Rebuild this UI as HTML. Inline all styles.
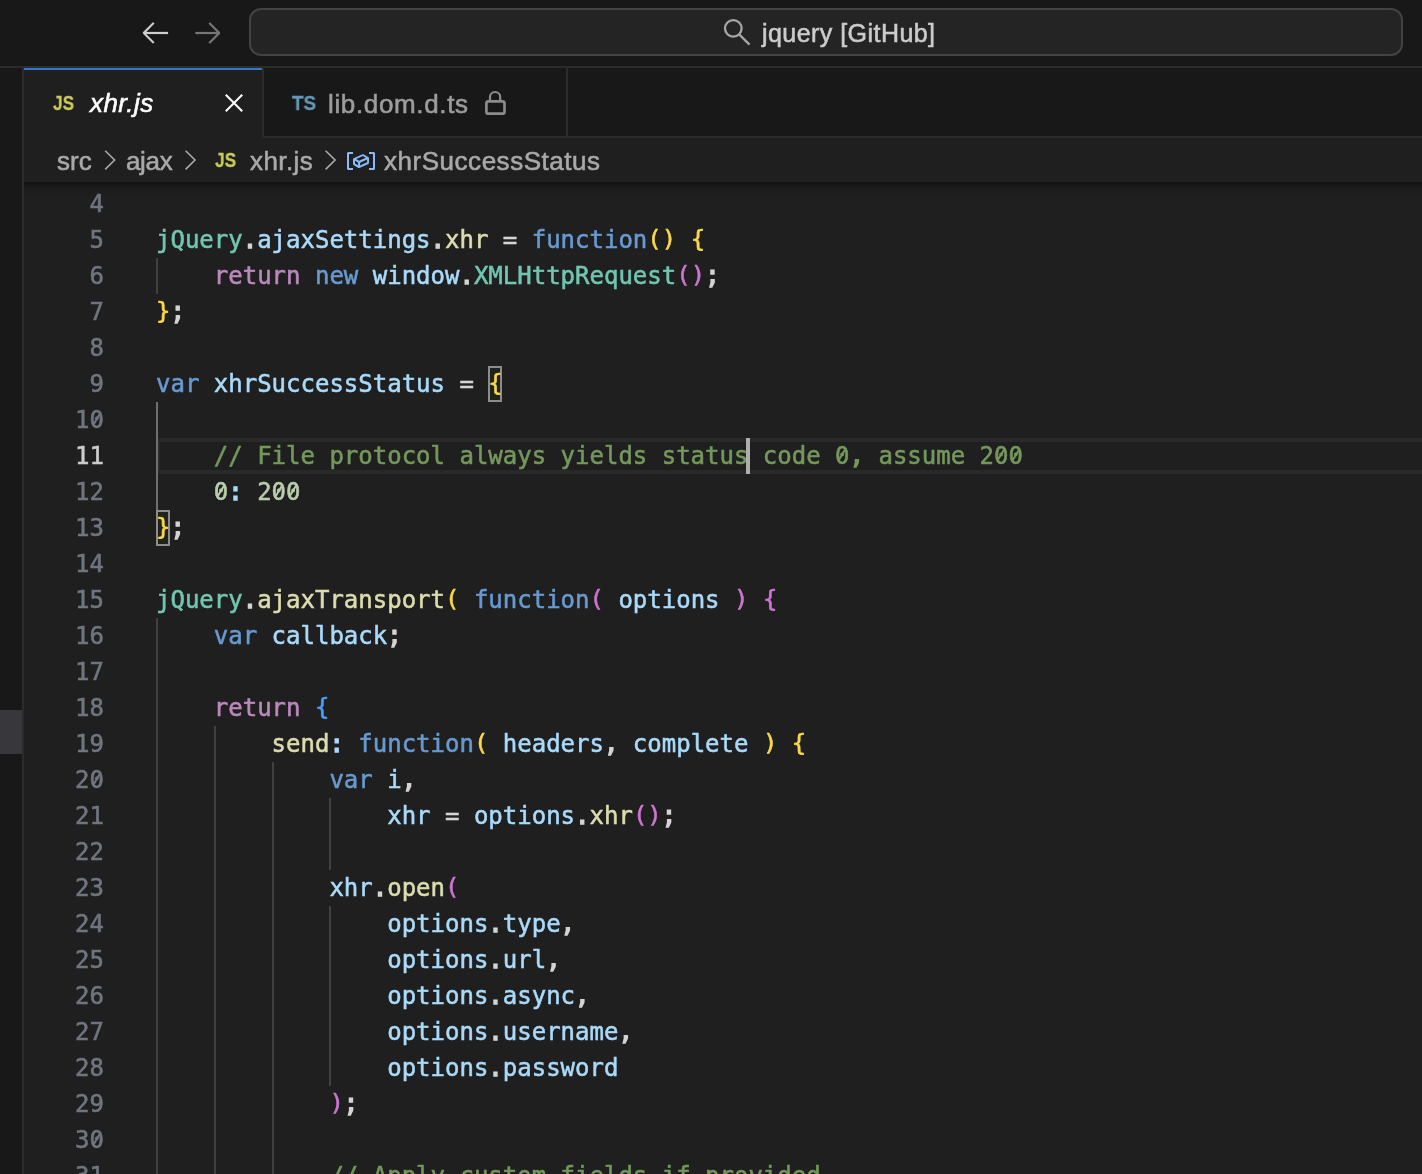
<!DOCTYPE html>
<html lang="en">
<head>
<meta charset="utf-8">
<title>xhr.js - jquery [GitHub]</title>
<style>
*{box-sizing:border-box;margin:0;padding:0}
html,body{width:1422px;height:1174px;overflow:hidden;background:#1f1f1f}
body{position:relative;font-family:"Liberation Sans",sans-serif;color:#ccc}
.abs{position:absolute}
.ui{will-change:transform;-webkit-text-stroke:0.55px}
#titlebar{left:0;top:0;width:1422px;height:68px;background:#181818;border-bottom:2px solid #2b2b2b}
#cc{left:249px;top:8px;width:1154px;height:48px;border:2px solid #434343;border-radius:12px;background:#242424}
#cctext{left:762px;top:17.5px;font-size:25px;line-height:30px;color:#ccc;white-space:pre;letter-spacing:.45px}
#side{left:0;top:68px;width:24px;height:1106px;background:#181818;border-right:2px solid #2b2b2b}
#sel{left:0;top:710px;width:22px;height:44px;background:#37373c}
#tabs{left:24px;top:68px;width:1398px;height:70px;background:#181818;border-bottom:2px solid #2b2b2b}
#tab1{left:24px;top:68px;width:240px;height:70px;background:#1f1f1f;border-right:2px solid #2b2b2b}
#bt{left:24px;top:68px;width:238px;height:2px;background:#3376cd}
#tab2{left:264px;top:68px;width:304px;height:68px;background:#181818;border-right:2px solid #2b2b2b}
#crumbs{left:24px;top:138px;width:1398px;height:44px;background:#1f1f1f}
.bc{top:146px;font-size:26px;line-height:30px;color:#a9a9a9;white-space:pre}
.tabt{font-size:26px;line-height:30px;white-space:pre}
#editor{left:24px;top:182px;width:1398px;height:992px;background:#1f1f1f;overflow:hidden}
#shadow{left:24px;top:182px;width:1398px;height:13px;background:linear-gradient(rgba(0,0,0,.42),rgba(0,0,0,.24) 25%,rgba(0,0,0,.1) 55%,rgba(0,0,0,.03) 80%,rgba(0,0,0,0));z-index:5}
#code{left:0;top:0;width:1422px;height:1174px;overflow:hidden;font-family:"DejaVu Sans Mono","Liberation Mono",monospace;font-size:24px;line-height:36px;tab-size:4;-moz-tab-size:4;will-change:transform;-webkit-text-stroke:0.55px}
.ln{position:absolute;left:24px;width:80px;text-align:right;color:#6f7680;height:36px;letter-spacing:0}
.ln.cur{color:#ccc}
.cl{position:absolute;left:156px;height:36px;white-space:pre}
.pn{-webkit-text-stroke:1.4px}
.br{display:inline-block;height:36px;vertical-align:top;transform-origin:50% 6px;transform:translateY(-1px) scaleY(.985)}
.ig{position:absolute;width:2px;background:#404040}
.ig.act{background:#707070}
.zs{position:absolute;width:2.3px;height:13.4px;margin:-6.7px 0 0 -1.15px;transform:rotate(31deg);border-radius:1px}
#hl{left:156px;top:438px;width:1266px;height:36px;border:4px solid #292929;border-right:0}
.bm{position:absolute;height:36px;width:14px;border:2px solid #8c8c8c;background:#1e2419}
#cursor{left:746px;top:438px;width:4px;height:36px;background:#aeafad}
svg{position:absolute;overflow:visible}
</style>
</head>
<body>
<div id="titlebar" class="abs"></div>
<div id="cc" class="abs"></div>
<!-- nav arrows -->
<svg style="left:139px;top:16.4px" width="32" height="32" viewBox="0 0 16 16" fill="#d0d0d0" stroke="#d0d0d0" stroke-width=".1">
  <path d="M7 3.093l-5 5V8.8l5 5 .707-.707-4.146-4.147H14.500v-1H3.560L7.707 3.800 7 3.093z"/>
</svg>
<svg style="left:192px;top:16.4px" width="32" height="32" viewBox="0 0 16 16" fill="#777" stroke="#777" stroke-width=".1">
  <path d="M9 13.887l5-5V8.180l-5-5-.707.707 4.146 4.147H1.700v1h10.740L8.293 13.180l.707.707z"/>
</svg>
<!-- search icon -->
<svg style="left:720px;top:16px" width="34" height="34" viewBox="720 16 34 34" fill="none" stroke="#a6a6a6" stroke-width="2.3">
  <circle cx="733.3" cy="28.35" r="8.3"/>
  <path d="M739.4 34.6L749.5 44.6"/>
</svg>
<div id="cctext" class="abs ui">jquery [GitHub]</div>

<div id="side" class="abs"></div>
<div id="sel" class="abs"></div>

<div id="tabs" class="abs"></div>
<div id="tab1" class="abs"></div><div id="bt" class="abs"></div>
<div id="tab2" class="abs"></div>
<!-- tab 1 contents -->
<div class="abs jsico ui" style="left:53px;top:91px">JS</div>
<div class="abs tabt ui" style="left:89.5px;top:88.3px;color:#fff;font-style:italic;letter-spacing:.4px">xhr.js</div>
<svg style="left:224px;top:93px" width="20" height="20" viewBox="224 93 20 20" fill="none" stroke="#fff" stroke-width="2">
  <path d="M225.8 94.8L242.2 111.2M242.2 94.8L225.8 111.2"/>
</svg>
<!-- tab 2 contents -->
<div class="abs tsico ui" style="left:291.5px;top:91px;transform:scaleX(.9)">TS</div>
<div class="abs tabt ui" style="left:328.3px;top:88.5px;color:#9d9d9d;letter-spacing:.65px">lib.dom.d.ts</div>
<svg style="left:483px;top:89px" width="26" height="28" viewBox="483 89 26 28" fill="none" stroke="#8b8b8b" stroke-width="2">
  <rect x="486.4" y="101.4" width="18.1" height="12.3" rx="2" stroke-width="2.7"/>
  <path d="M490 100.6V97.1a5.1 5.1 0 0 1 10.200 0V100.600" stroke-width="2.2"/>
</svg>

<div id="crumbs" class="abs"></div>
<div class="abs bc ui" style="left:57px;letter-spacing:0px">src</div>
<div class="abs bc ui" style="left:125.8px;letter-spacing:-.35px">ajax</div>
<div class="abs jsico ui" style="left:215px;top:148px">JS</div>
<div class="abs bc ui" style="left:250px;letter-spacing:.4px">xhr.js</div>
<div class="abs bc ui" style="left:384.4px;letter-spacing:.53px">xhrSuccessStatus</div>
<svg style="left:100px;top:148px" width="240" height="26" viewBox="100 148 240 26" fill="none" stroke="#a9a9a9" stroke-width="1.6">
  <path d="M105.2 150.7L114.6 160.05L105.2 169.4"/>
  <path d="M185.6 150.7L195 160.05L185.6 169.4"/>
  <path d="M325.6 150.7L335.1 160.05L325.6 169.4"/>
</svg>
<!-- symbol-variable icon -->
<svg style="left:345.3px;top:144px" width="32" height="32" viewBox="0 0 16 16" fill="#86bcf9">
  <path fill-rule="evenodd" clip-rule="evenodd" d="M2 5h2V4H1.5l-.5.5v8l.5.5H4v-1H2V5zm12.500-1H12v1h2v7h-2v1h2.500l.5-.5v-8l-.5-.5zm-2.740 2.570L12 7v2.510l-.3.450-4.500 2h-.460l-2.500-1.500-.240-.430v-2.500l.3-.460 4.500-2h.460l2.500 1.500zM5 9.710l1.500.9V9.280L5 8.380v1.330zm.580-2.150l1.450.870 3.390-1.500-1.450-.870-3.390 1.500zm1.950 3.170l3.500-1.560v-1.400l-3.500 1.550v1.410z"/>
</svg>

<div id="editor" class="abs"></div>
<div id="hl" class="abs"></div>
<div class="bm" style="left:488px;top:366px"></div>
<div class="bm" style="left:156px;top:510px"></div>
<div id="code" class="abs">
<div class="ig" style="left:156.00px;top:258px;height:36px"></div>
<div class="ig act" style="left:156.00px;top:402px;height:108px"></div>
<div class="ig" style="left:156.00px;top:618px;height:576px"></div>
<div class="ig" style="left:213.80px;top:726px;height:468px"></div>
<div class="ig" style="left:271.60px;top:762px;height:432px"></div>
<div class="ig" style="left:329.40px;top:798px;height:72px"></div>
<div class="ig" style="left:329.40px;top:906px;height:180px"></div>
<div class="ln" style="top:186px">4</div>
<div class="ln" style="top:222px">5</div>
<div class="cl" style="top:222px"><span style="color:#71c6b1">jQuery</span><span class="pn" style="color:#d4d4d4">.</span><span style="color:#aadafa">ajaxSettings</span><span class="pn" style="color:#d4d4d4">.</span><span style="color:#dcdcaf">xhr</span><span style="color:#d4d4d4"> = </span><span style="color:#679ad1">function</span><span class="br" style="color:#f9d849">()</span><span style="color:#d4d4d4"> </span><span class="br" style="color:#f9d849">{</span></div>
<div class="ln" style="top:258px">6</div>
<div class="cl" style="top:258px"><span style="color:#d4d4d4">	</span><span style="color:#bc89bd">return</span><span style="color:#d4d4d4"> </span><span style="color:#679ad1">new</span><span style="color:#d4d4d4"> </span><span style="color:#aadafa">window</span><span class="pn" style="color:#d4d4d4">.</span><span style="color:#71c6b1">XMLHttpRequest</span><span class="br" style="color:#cc76d1">()</span><span class="pn" style="color:#d4d4d4">;</span></div>
<div class="ln" style="top:294px">7</div>
<div class="cl" style="top:294px"><span class="br" style="color:#f9d849">}</span><span class="pn" style="color:#d4d4d4">;</span></div>
<div class="ln" style="top:330px">8</div>
<div class="ln" style="top:366px">9</div>
<div class="cl" style="top:366px"><span style="color:#679ad1">var</span><span style="color:#d4d4d4"> </span><span style="color:#aadafa">xhrSuccessStatus</span><span style="color:#d4d4d4"> = </span><span class="br" style="color:#f9d849">{</span></div>
<div class="ln" style="top:402px">10</div>
<div class="ln cur" style="top:438px">11</div>
<div class="cl" style="top:438px"><span style="color:#d4d4d4">	</span><span style="color:#74985c">// File protocol always yields status code 0</span><span class="pn" style="color:#74985c">,</span><span style="color:#74985c"> assume 200</span></div>
<div class="ln" style="top:474px">12</div>
<div class="cl" style="top:474px"><span style="color:#d4d4d4">	</span><span style="color:#bacdab">0</span><span class="pn" style="color:#aadafa">:</span><span style="color:#d4d4d4"> </span><span style="color:#bacdab">200</span></div>
<div class="ln" style="top:510px">13</div>
<div class="cl" style="top:510px"><span class="br" style="color:#f9d849">}</span><span class="pn" style="color:#d4d4d4">;</span></div>
<div class="ln" style="top:546px">14</div>
<div class="ln" style="top:582px">15</div>
<div class="cl" style="top:582px"><span style="color:#71c6b1">jQuery</span><span class="pn" style="color:#d4d4d4">.</span><span style="color:#dcdcaf">ajaxTransport</span><span class="br" style="color:#f9d849">(</span><span style="color:#d4d4d4"> </span><span style="color:#679ad1">function</span><span class="br" style="color:#cc76d1">(</span><span style="color:#d4d4d4"> </span><span style="color:#aadafa">options</span><span style="color:#d4d4d4"> </span><span class="br" style="color:#cc76d1">)</span><span style="color:#d4d4d4"> </span><span class="br" style="color:#cc76d1">{</span></div>
<div class="ln" style="top:618px">16</div>
<div class="cl" style="top:618px"><span style="color:#d4d4d4">	</span><span style="color:#679ad1">var</span><span style="color:#d4d4d4"> </span><span style="color:#aadafa">callback</span><span class="pn" style="color:#d4d4d4">;</span></div>
<div class="ln" style="top:654px">17</div>
<div class="ln" style="top:690px">18</div>
<div class="cl" style="top:690px"><span style="color:#d4d4d4">	</span><span style="color:#bc89bd">return</span><span style="color:#d4d4d4"> </span><span class="br" style="color:#4a9df8">{</span></div>
<div class="ln" style="top:726px">19</div>
<div class="cl" style="top:726px"><span style="color:#d4d4d4">		</span><span style="color:#dcdcaf">send</span><span class="pn" style="color:#aadafa">:</span><span style="color:#d4d4d4"> </span><span style="color:#679ad1">function</span><span class="br" style="color:#f9d849">(</span><span style="color:#d4d4d4"> </span><span style="color:#aadafa">headers</span><span class="pn" style="color:#d4d4d4">,</span><span style="color:#d4d4d4"> </span><span style="color:#aadafa">complete</span><span style="color:#d4d4d4"> </span><span class="br" style="color:#f9d849">)</span><span style="color:#d4d4d4"> </span><span class="br" style="color:#f9d849">{</span></div>
<div class="ln" style="top:762px">20</div>
<div class="cl" style="top:762px"><span style="color:#d4d4d4">			</span><span style="color:#679ad1">var</span><span style="color:#d4d4d4"> </span><span style="color:#aadafa">i</span><span class="pn" style="color:#d4d4d4">,</span></div>
<div class="ln" style="top:798px">21</div>
<div class="cl" style="top:798px"><span style="color:#d4d4d4">				</span><span style="color:#aadafa">xhr</span><span style="color:#d4d4d4"> = </span><span style="color:#aadafa">options</span><span class="pn" style="color:#d4d4d4">.</span><span style="color:#dcdcaf">xhr</span><span class="br" style="color:#cc76d1">()</span><span class="pn" style="color:#d4d4d4">;</span></div>
<div class="ln" style="top:834px">22</div>
<div class="ln" style="top:870px">23</div>
<div class="cl" style="top:870px"><span style="color:#d4d4d4">			</span><span style="color:#aadafa">xhr</span><span class="pn" style="color:#d4d4d4">.</span><span style="color:#dcdcaf">open</span><span class="br" style="color:#cc76d1">(</span></div>
<div class="ln" style="top:906px">24</div>
<div class="cl" style="top:906px"><span style="color:#d4d4d4">				</span><span style="color:#aadafa">options</span><span class="pn" style="color:#d4d4d4">.</span><span style="color:#aadafa">type</span><span class="pn" style="color:#d4d4d4">,</span></div>
<div class="ln" style="top:942px">25</div>
<div class="cl" style="top:942px"><span style="color:#d4d4d4">				</span><span style="color:#aadafa">options</span><span class="pn" style="color:#d4d4d4">.</span><span style="color:#aadafa">url</span><span class="pn" style="color:#d4d4d4">,</span></div>
<div class="ln" style="top:978px">26</div>
<div class="cl" style="top:978px"><span style="color:#d4d4d4">				</span><span style="color:#aadafa">options</span><span class="pn" style="color:#d4d4d4">.</span><span style="color:#aadafa">async</span><span class="pn" style="color:#d4d4d4">,</span></div>
<div class="ln" style="top:1014px">27</div>
<div class="cl" style="top:1014px"><span style="color:#d4d4d4">				</span><span style="color:#aadafa">options</span><span class="pn" style="color:#d4d4d4">.</span><span style="color:#aadafa">username</span><span class="pn" style="color:#d4d4d4">,</span></div>
<div class="ln" style="top:1050px">28</div>
<div class="cl" style="top:1050px"><span style="color:#d4d4d4">				</span><span style="color:#aadafa">options</span><span class="pn" style="color:#d4d4d4">.</span><span style="color:#aadafa">password</span></div>
<div class="ln" style="top:1086px">29</div>
<div class="cl" style="top:1086px"><span style="color:#d4d4d4">			</span><span class="br" style="color:#cc76d1">)</span><span class="pn" style="color:#d4d4d4">;</span></div>
<div class="ln" style="top:1122px">30</div>
<div class="ln" style="top:1158px">31</div>
<div class="cl" style="top:1158px"><span style="color:#d4d4d4">			</span><span style="color:#74985c">// Apply custom fields if provided</span></div>
<div class="zs" style="left:96.77px;top:419px;background:#6f7680"></div>
<div class="zs" style="left:842.38px;top:455px;background:#74985c"></div>
<div class="zs" style="left:1001.32px;top:455px;background:#74985c"></div>
<div class="zs" style="left:1015.77px;top:455px;background:#74985c"></div>
<div class="zs" style="left:221.03px;top:491px;background:#bacdab"></div>
<div class="zs" style="left:278.83px;top:491px;background:#bacdab"></div>
<div class="zs" style="left:293.27px;top:491px;background:#bacdab"></div>
<div class="zs" style="left:96.77px;top:779px;background:#6f7680"></div>
<div class="zs" style="left:96.77px;top:1139px;background:#6f7680"></div>
</div>
<div id="cursor" class="abs"></div>
<div id="shadow" class="abs"></div>
<style>
.jsico,.tsico{-webkit-text-stroke:.3px !important;font-family:"Liberation Sans",sans-serif;font-weight:bold;font-size:21px;line-height:24px;transform-origin:0 0;transform:scaleX(.82);white-space:pre}
.jsico{color:#cbcb5a}
.tsico{color:#6398b7}
</style>
</body>
</html>
